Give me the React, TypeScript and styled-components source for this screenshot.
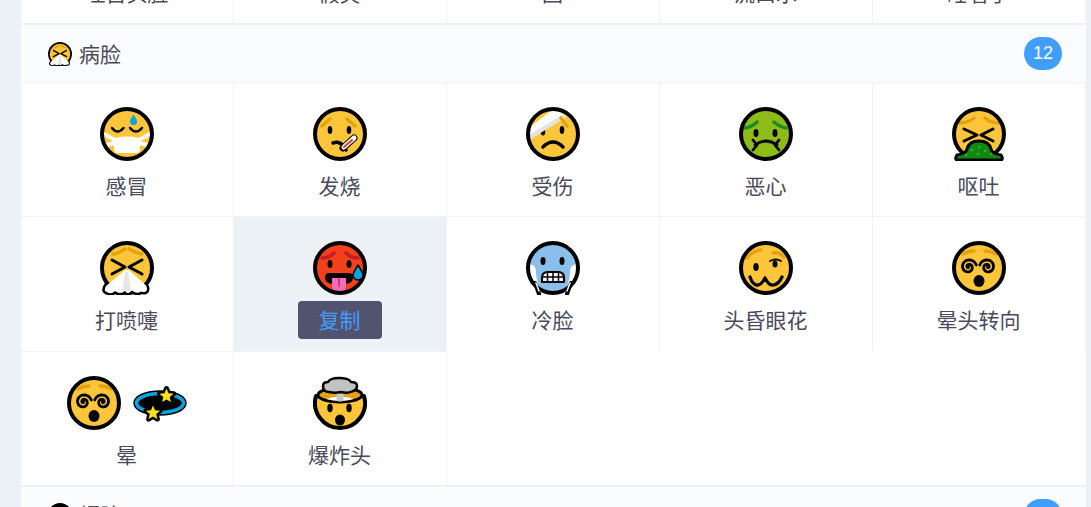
import React from "react";
import styled, { createGlobalStyle } from "styled-components";

const GlobalStyle = createGlobalStyle`
  html, body {
    margin: 0;
    padding: 0;
    background: #ebf1f6;
    font-family: "Noto Sans CJK SC", "Liberation Sans", sans-serif;
  }
`;

const yellow = "#fdc63a";
const brow = "#e2a312";
const cyan = "#00a6e8";

const Page = styled.div`
  height: 507px;
  overflow: hidden;
  padding-left: 21px;
`;

// the list is scrolled, the first row only just shows its labels
const List = styled.div`
  width: 1065px;
  margin-top: -111.33px;
`;

const Header = styled.div`
  height: 57px;
  background: #fbfcfe;
  display: flex;
  align-items: center;
  padding: 0 24px 0 27px;
  color: #4a4a5c;
  font-size: 21px;
`;

const HeaderTitle = styled.span`
  margin: 0 0 2px 7px;
  flex: 1;
`;

const Badge = styled.span`
  min-width: 38px;
  height: 33px;
  border-radius: 17px;
  background: #409eff;
  color: #fff;
  font-size: 18px;
  line-height: 33px;
  text-align: center;
  font-family: "Liberation Sans", sans-serif;
`;

const Grid = styled.div`
  display: grid;
  grid-template-columns: repeat(5, 213px);
  grid-auto-rows: 134.33px;
  background: #fff;
  border-bottom: 2px solid #ebf1f6;
`;

const Cell = styled.div<{ $active?: boolean }>`
  box-sizing: border-box;
  display: flex;
  flex-direction: column;
  align-items: center;
  padding-top: 24px;
  border-top: 1px solid #f0f3f6;
  border-right: 1px solid #f0f3f6;
  background: ${(p) => (p.$active ? "#ecf1f6" : "#fff")};
`;

const Emojis = styled.div`
  display: flex;
  gap: 12px;
  height: 54px;
`;

const Label = styled.div<{ $active?: boolean }>`
  margin-top: 6px;
  padding: 0 21.5px 0 20.5px;
  height: 38px;
  line-height: 36px;
  font-size: 21px;
  white-space: nowrap;
  border-radius: 4px;
  color: ${(p) => (p.$active ? "#409eff" : "#4a4a5c")};
  background: ${(p) => (p.$active ? "#52536f" : "transparent")};
`;

const Svg = styled.svg<{ $size: number }>`
  display: block;
  width: ${(p) => p.$size}px;
  height: ${(p) => p.$size}px;
  flex: none;
`;

type FaceProps = {
  fill?: string;
  size?: number;
  children?: React.ReactNode;
  over?: React.ReactNode;
};

function Face({ fill = yellow, size = 54, children, over }: FaceProps) {
  return (
    <Svg $size={size} viewBox="0 0 54 54" fill="none" strokeLinecap="round" strokeLinejoin="round">
      <circle cx="27" cy="27" r="25" fill={fill} />
      {children}
      <circle cx="27" cy="27" r="25" stroke="#000" strokeWidth="4" />
      {over}
    </Svg>
  );
}

function spiral(cx: number, cy: number, turns: number, maxR: number, flip: number) {
  const pts: string[] = [];
  const steps = 48;
  for (let i = 0; i <= steps; i++) {
    const t = i / steps;
    const a = t * turns * Math.PI * 2;
    const r = t * maxR;
    pts.push(`${(cx + flip * Math.cos(a + 1) * r).toFixed(2)} ${(cy + Math.sin(a + 1) * r).toFixed(2)}`);
  }
  return "M" + pts.join("L");
}

const Brows = ({ color = brow, d }: { color?: string; d: string }) => (
  <path d={d} stroke={color} strokeWidth="3.500" />
);

const Cold = () => (
  <Face>
    <path d="M12 21q5.500 7 11.500 0M30 21q6 7 12 0" stroke="#000" strokeWidth="2.500" />
    <path d="M33.500 7.500c2 3.500 3.500 5 3.500 7a3.500 3.500 0 0 1-7 0c0-2 1.500-3.500 3.500-7z" fill={cyan} />
    <path d="M2 26l13 7M2 39l13-3M52 26l-13 7M52 39l-13-3" stroke="#fff" strokeWidth="4" strokeLinecap="butt" />
    <path d="M14 33q0-2 3-2.500q10-2 20 0q3 .5 3 2.500v9q0 4-4 4h-18q-4 0-4-4z" fill="#fff" />
  </Face>
);

const Fever = () => (
  <Face
    over={
      <>
        <path d="M30 41L41 31" stroke="#000" strokeWidth="7" />
        <path d="M31 40L41 31" stroke="#fff" strokeWidth="5" />
        <path d="M31 40L39 33" stroke="#e8391c" strokeWidth="2" />
      </>
    }
  >
    <Brows d="M9 19l8-7M34 12l8 7" />
    <ellipse cx="17" cy="23" rx="2.300" ry="4" fill="#000" />
    <ellipse cx="36" cy="23" rx="2.300" ry="4" fill="#000" />
    <path d="M20 36q8-3 13 7" stroke="#000" strokeWidth="3.500" />
  </Face>
);

const Injured = () => (
  <Face>
    <ellipse cx="17" cy="24.500" rx="2.300" ry="4" fill="#000" />
    <ellipse cx="36" cy="23" rx="2.300" ry="4" fill="#000" />
    <path d="M0 23L30 0L40 10L3 33z" fill="#fff" />
    <path d="M40 10L3 33L1 29L38 7z" fill="#e2e2e2" />
    <Brows d="M35 11l6 8" />
    <path d="M17 40q10-10 20 0" stroke="#000" strokeWidth="3.500" />
  </Face>
);

const Nauseated = () => (
  <Face fill="#8dbb17">
    <Brows color="#1f8a1f" d="M6 21q7-1 12-6M35 15q6 5 12 6" />
    <ellipse cx="17" cy="26" rx="2.500" ry="4" fill="#000" />
    <ellipse cx="36" cy="26" rx="2.500" ry="4" fill="#000" />
    <path d="M16 38q11-8 22 0M14 33l4 5l-4 5M40 33l-4 5l4 5" stroke="#000" strokeWidth="2.800" />
  </Face>
);

const Vomit = () => (
  <Face
    over={
      <>
        <path
          d="M5 48Q14 47 15 42Q17 34 27 34Q37 34 39 42Q40 47 49 48Q52 53 48 53H6Q2 53 5 48z"
          fill="#0f8a10"
          stroke="#000"
          strokeWidth="3"
        />
        <g fill="#35b02f">
          <circle cx="20" cy="43" r="1.300" />
          <circle cx="27" cy="40" r="1.300" />
          <circle cx="33" cy="44" r="1.300" />
          <circle cx="26" cy="47" r="1.300" />
          <circle cx="39" cy="47" r="1.300" />
          <circle cx="14" cy="48" r="1.300" />
        </g>
      </>
    }
  >
    <Brows d="M8 16q8 0 14-5M33 11q6 5 14 5" />
    <path d="M12 22l13 6l-13 6M41 22l-12 6l12 6" stroke="#000" strokeWidth="3" />
  </Face>
);

const sneezeTissue = (
  <>
    <path
      d="M6 45q-3 5 1 6q4 3 8-1q5 4 10 0q3 4 7-.5q5 4 9 1q6 2 6-3q0-1-1-3"
      stroke="#000"
      strokeWidth="5"
    />
    <path
      d="M25 29L6 45q-3 5 1 6q4 3 8-1q5 4 10 0q3 4 7-.5q5 4 9 1q6 2 6-3q0-1-1-3L29 29z"
      fill="#fff"
    />
    <path d="M25 31l-3 19h9l-3-19z" fill="#e6e6e6" />
  </>
);

const Sneeze = ({ size = 54 }: { size?: number }) => (
  <Face size={size} over={sneezeTissue}>
    <Brows d="M13 13q7-1 12-5M29 8q6 4 13 5" />
    <path d="M12 19l13 7l-13 7M42 19l-13 7l13 7" stroke="#000" strokeWidth="3" />
  </Face>
);

const Hot = () => (
  <Face
    fill="#f4401c"
    over={
      <path
        d="M45 24c3 5 5 8 5 10a5 5 0 0 1-10 0c0-2 2-5 5-10z"
        fill={cyan}
        stroke="#000"
        strokeWidth="1.500"
      />
    }
  >
    <Brows color="#c21f22" d="M9 17q7 0 12-5M33 12q5 5 12 5" />
    <ellipse cx="17" cy="23" rx="2.500" ry="4" fill="#000" />
    <ellipse cx="36" cy="23" rx="2.500" ry="4" fill="#000" />
    <path d="M12 36q0-4 5-4h18q5 0 5 4q0 7-8 7H20q-8 0-8-7z" fill="#000" />
    <path d="M19 37h14v8a7 7 0 0 1-14 0z" fill="#ee6fb5" />
    <path d="M26 38v7" stroke="#d62f92" strokeWidth="2" />
  </Face>
);

const Freezing = () => (
  <Face
    fill="#8abfec"
    over={
      <>
        <path d="M9 42l4 11M45 42l-4 11" stroke="#000" strokeWidth="4" />
        <path d="M10 42l3 8M44 42l-3 8" stroke="#fff" strokeWidth="1.500" />
      </>
    }
  >
    <path d="M4 23q6 1 6 8q0 6 3 15q-3 0-6-5q-4-8-3-18zM50 23q-6 1-6 8q0 6-3 15q3 0 6-5q4-8 3-18z" fill="#fff" />
    <ellipse cx="17" cy="20" rx="2.500" ry="4" fill="#000" />
    <ellipse cx="36" cy="20" rx="2.500" ry="4" fill="#000" />
    <path d="M16 41v-4q0-6 6-6h10q6 0 6 6v4z" fill="#fff" stroke="#000" strokeWidth="2.200" />
    <path d="M21.500 31v10M27 31v10M32.500 31v10M16 36h22" stroke="#000" strokeWidth="1.500" />
  </Face>
);

const Woozy = () => (
  <Face>
    <Brows d="M8 17q5-7 14-8M34 12q7-1 11 4" />
    <ellipse cx="17" cy="26" rx="2.700" ry="4" fill="#000" />
    <ellipse cx="36" cy="23" rx="2.500" ry="3.500" fill="#000" />
    <path d="M31 20q6-3 11 0" stroke="#000" strokeWidth="1.800" />
    <path d="M11 36Q14 45 19.500 44Q23 43 26 37Q30 45 34.500 44Q40 43 43 36" stroke="#000" strokeWidth="3.200" />
  </Face>
);

const Dizzy = () => (
  <Face>
    <Brows d="M11 13q5-3 11-3M33 10q6 0 11 3" />
    <path d={spiral(16.5, 26, 1.8, 8, 1)} stroke="#000" strokeWidth="2.800" />
    <path d={spiral(35.5, 26, 1.8, 8, -1)} stroke="#000" strokeWidth="2.800" />
    <ellipse cx="27" cy="40" rx="5.500" ry="6" fill="#000" />
  </Face>
);

const starPoints = (cx: number, cy: number, r: number) => {
  const pts: string[] = [];
  for (let i = 0; i < 10; i++) {
    const a = (Math.PI / 5) * i - Math.PI / 2;
    const rr = i % 2 === 0 ? r : r * 0.45;
    pts.push(`${(cx + Math.cos(a) * rr).toFixed(1)},${(cy + Math.sin(a) * rr).toFixed(1)}`);
  }
  return pts.join(" ");
};

const DizzyStars = () => (
  <Svg $size={54} viewBox="0 0 54 54" fill="none" strokeLinejoin="round">
    <ellipse cx="27" cy="27" rx="23.500" ry="9.500" fill="#000" stroke="#000" strokeWidth="6.500" />
    <ellipse cx="27" cy="27" rx="23.500" ry="9.500" stroke={cyan} strokeWidth="3.500" />
    <polygon points={starPoints(33.5, 20, 7.5)} fill="#ffe21a" stroke="#000" strokeWidth="5" paintOrder="stroke" />
    <polygon points={starPoints(20, 37, 7.5)} fill="#ffe21a" stroke="#000" strokeWidth="5" paintOrder="stroke" />
  </Svg>
);

const Exploding = () => (
  <Svg $size={54} viewBox="0 0 54 54" fill="none" strokeLinecap="round" strokeLinejoin="round">
    <path d="M3 20A25 25 0 1 0 51 20z" fill={yellow} stroke="#000" strokeWidth="4" />
    <ellipse cx="27" cy="19" rx="22" ry="7" fill={brow} stroke="#000" strokeWidth="3" />
    <path d="M13 23q14-5 28 0q-14 4-28 0z" fill="#fff" />
    <path d="M23.500 13h7v12q-3.500 1-7 0z" fill="#c9c9c9" />
    <path
      d="M10 10q0-4 5-4q2-4 11-4q10 0 12 4q6 0 6 4t-5 5.500q-4 2-11 .5q-6 1.500-12 0q-6 0-6-6z"
      fill="#c2c2c2"
      stroke="#000"
      strokeWidth="2.500"
    />
    <ellipse cx="17" cy="32" rx="2.700" ry="4.200" fill="#000" />
    <ellipse cx="36" cy="32" rx="2.700" ry="4.200" fill="#000" />
    <ellipse cx="27" cy="44" rx="5" ry="5.500" fill="#000" />
  </Svg>
);

const Hat = () => (
  <Face size={24}>
    <path d="M6 13A25 25 0 0 1 48 13z" fill="#000" />
  </Face>
);

type Item = { name: string; icons: React.ReactNode; active?: boolean };

const scrolledOff: Item[] = [
  { name: "吐舌头脸", icons: <Face /> },
  { name: "假笑", icons: <Face /> },
  { name: "困", icons: <Face /> },
  { name: "流口水", icons: <Face /> },
  { name: "睡着了", icons: <Face /> },
];

const sick: Item[] = [
  { name: "感冒", icons: <Cold /> },
  { name: "发烧", icons: <Fever /> },
  { name: "受伤", icons: <Injured /> },
  { name: "恶心", icons: <Nauseated /> },
  { name: "呕吐", icons: <Vomit /> },
  { name: "打喷嚏", icons: <Sneeze /> },
  { name: "复制", icons: <Hot />, active: true },
  { name: "冷脸", icons: <Freezing /> },
  { name: "头昏眼花", icons: <Woozy /> },
  { name: "晕头转向", icons: <Dizzy /> },
  {
    name: "晕",
    icons: (
      <>
        <Dizzy />
        <DizzyStars />
      </>
    ),
  },
  { name: "爆炸头", icons: <Exploding /> },
];

function EmojiGrid({ items }: { items: Item[] }) {
  return (
    <Grid>
      {items.map((item) => (
        <Cell key={item.name} $active={item.active}>
          <Emojis>{item.icons}</Emojis>
          <Label $active={item.active}>{item.name}</Label>
        </Cell>
      ))}
    </Grid>
  );
}

export default function App() {
  return (
    <Page>
      <GlobalStyle />
      <List>
        <EmojiGrid items={scrolledOff} />
        <Header>
          <Sneeze size={24} />
          <HeaderTitle>病脸</HeaderTitle>
          <Badge>12</Badge>
        </Header>
        <EmojiGrid items={sick} />
        <Header>
          <Hat />
          <HeaderTitle>帽脸</HeaderTitle>
          <Badge>3</Badge>
        </Header>
      </List>
    </Page>
  );
}
